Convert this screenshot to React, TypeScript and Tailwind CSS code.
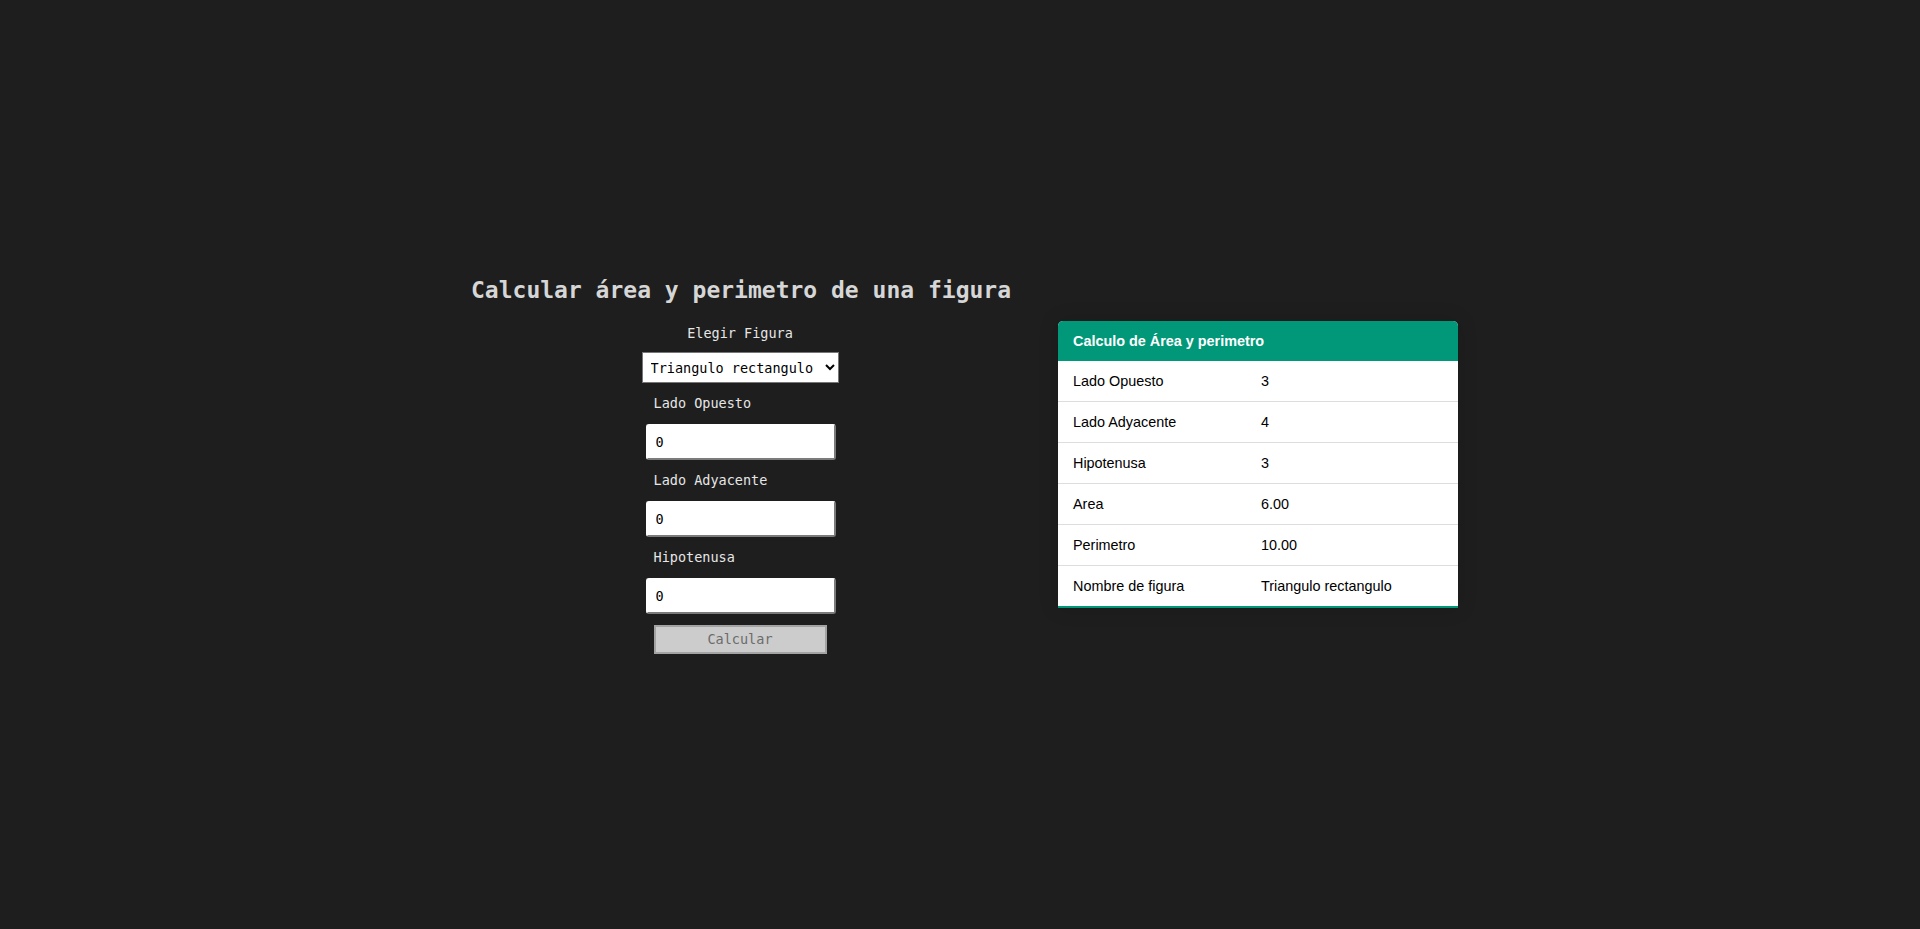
import { useState } from "react";

const rows = [
  { label: "Lado Opuesto", value: "3" },
  { label: "Lado Adyacente", value: "4" },
  { label: "Hipotenusa", value: "3" },
  { label: "Area", value: "6.00" },
  { label: "Perimetro", value: "10.00" },
  { label: "Nombre de figura", value: "Triangulo rectangulo" },
];

export default function App() {
  const [values, setValues] = useState({ opuesto: "0", adyacente: "0", hipotenusa: "0" });

  const fields = [
    { key: "opuesto" as const, label: "Lado Opuesto" },
    { key: "adyacente" as const, label: "Lado Adyacente" },
    { key: "hipotenusa" as const, label: "Hipotenusa" },
  ];

  return (
    <div className="min-h-[929px] w-full bg-[#1e1e1e] pt-[276px] font-['DejaVu_Sans_Mono',monospace]">
      <div className="ml-[471px] w-[987px]">
        <h1 className="text-[23px] font-bold leading-[28px] text-[#d6d6d6]">
          Calcular área y perimetro de una figura
        </h1>

        <div className="mt-[17px] flex items-start gap-[49px]">
          {/* Form */}
          <div className="flex w-[538px] flex-col items-center pt-[4px]">
            <div className="flex w-[197px] flex-col">
              <label className="text-center text-[13.5px] leading-[16px] text-[#e6e6e6]">Elegir Figura</label>
              <select
                defaultValue="triangulo"
                className="mt-[11px] h-[31px] w-[197px] border border-[#767676] bg-white px-[4px] text-[13.5px] text-black"
              >
                <option value="cuadrado">Cuadrado</option>
                <option value="triangulo">Triangulo rectangulo</option>
                <option value="circulo">Circulo</option>
              </select>

              {fields.map(({ key, label }) => (
                <div key={key} className="flex flex-col">
                  <label className="mt-[12px] pl-[12px] text-[13.5px] leading-[16px] text-[#e6e6e6]">{label}</label>
                  <input
                    type="text"
                    value={values[key]}
                    onChange={(e) => setValues((v) => ({ ...v, [key]: e.target.value }))}
                    className="ml-[4px] mt-[13px] h-[36px] w-[190px] rounded-[3px] border-2 border-white border-r-[#7b7b7b] border-b-[#7b7b7b] bg-white px-[8px] text-[13.5px] text-black outline-none"
                  />
                </div>
              ))}

              <button className="ml-[12px] mt-[11px] h-[29px] w-[173px] border-2 border-[#a3a3a3] bg-[#cccccc] text-[13.5px] text-[#6b6b6b]">
                Calcular
              </button>
            </div>
          </div>

          {/* Result table */}
          <div className="w-[400px] overflow-hidden rounded-t-[5px] bg-white shadow-[0_0_20px_rgba(0,0,0,0.15)]">
            <table className="w-full border-collapse text-left font-['Liberation_Sans',Arial,sans-serif] text-[14.4px] leading-[16px]">
              <thead>
                <tr className="bg-[#009879] text-white">
                  <th colSpan={2} className="px-[15px] py-[12px] font-bold">
                    Calculo de Área y perimetro
                  </th>
                </tr>
              </thead>
              <tbody>
                {rows.map((r, i) => (
                  <tr
                    key={r.label}
                    className={i === rows.length - 1 ? "border-b-2 border-[#009879]" : "border-b border-[#dddddd]"}
                  >
                    <td className="w-[188px] px-[15px] py-[12px] text-black">{r.label}</td>
                    <td className="px-[15px] py-[12px] text-black">{r.value}</td>
                  </tr>
                ))}
              </tbody>
            </table>
          </div>
        </div>
      </div>
    </div>
  );
}
